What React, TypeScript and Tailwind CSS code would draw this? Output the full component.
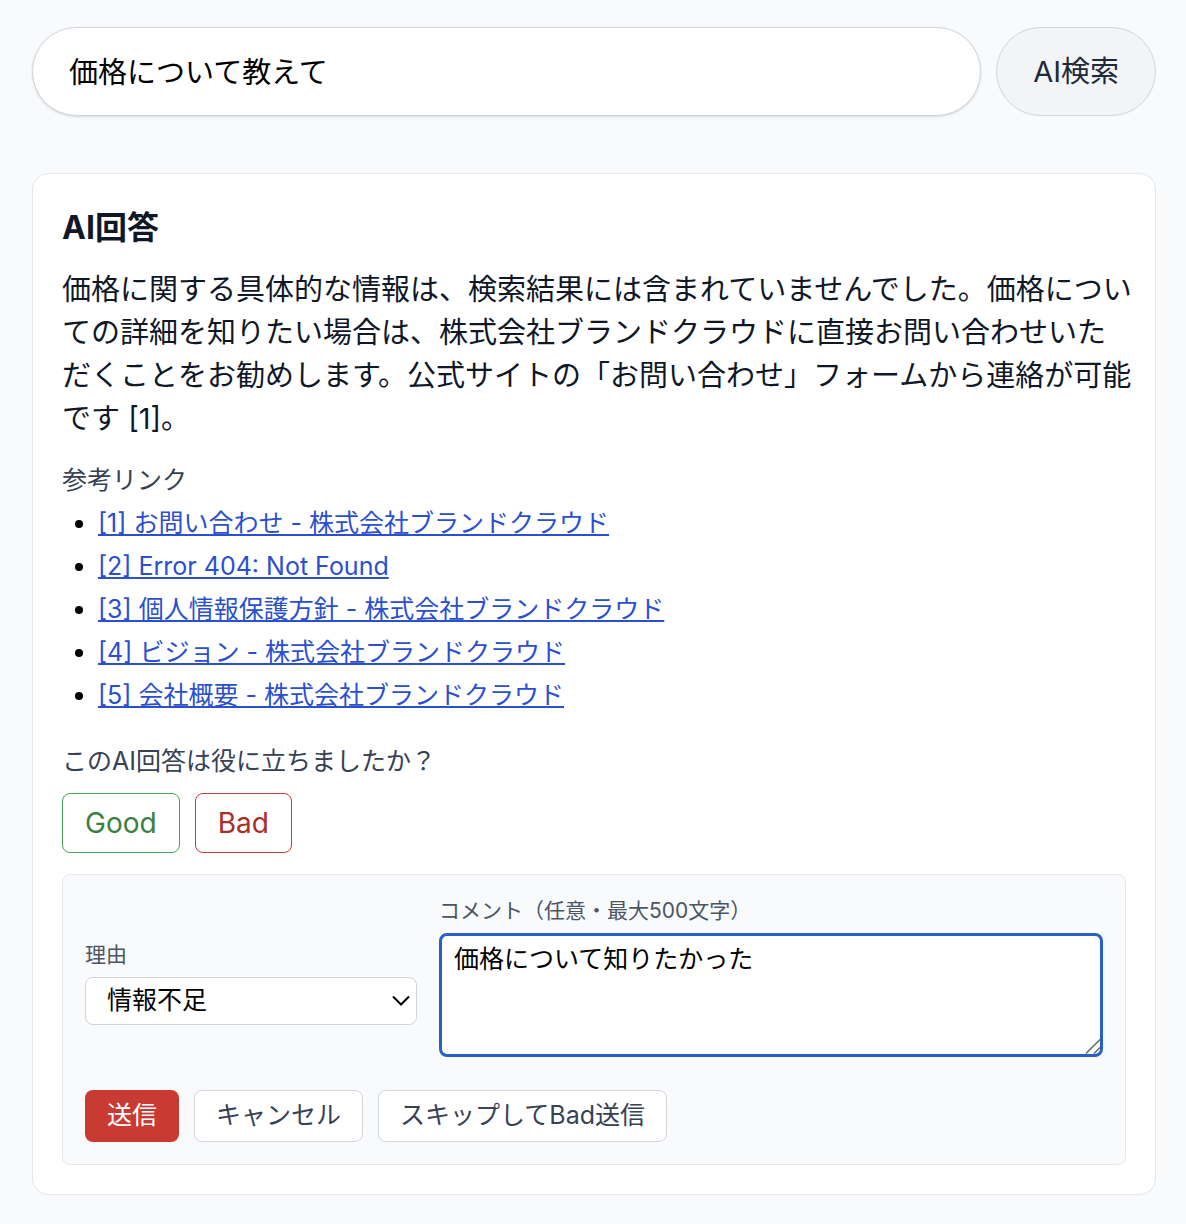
import { useState } from "react";

const links = [
  "[1] お問い合わせ - 株式会社ブランドクラウド",
  "[2] Error 404: Not Found",
  "[3] 個人情報保護方針 - 株式会社ブランドクラウド",
  "[4] ビジョン - 株式会社ブランドクラウド",
  "[5] 会社概要 - 株式会社ブランドクラウド",
];

export default function App() {
  const [query, setQuery] = useState("価格について教えて");
  const [reason, setReason] = useState("情報不足");
  const [comment, setComment] = useState("価格について知りたかった");

  return (
    <div className="min-h-screen bg-gray-50 pl-8 pr-[30px] pt-[27px] pb-[29px] text-gray-900 font-[Inter,'Noto_Sans_CJK_JP',sans-serif]">
      {/* Search bar */}
      <form className="flex gap-[15px] mb-[57px]" onSubmit={(e) => e.preventDefault()}>
        <input
          type="text"
          aria-label="検索キーワード"
          value={query}
          onChange={(e) => setQuery(e.target.value)}
          className="flex-1 min-w-0 h-[89px] px-9 pb-1 rounded-full border border-gray-300 bg-white text-black text-[29px] shadow-sm focus:outline-none"
        />
        <button
          type="submit"
          className="h-[89px] px-9 rounded-full border border-gray-300 bg-gray-100 text-gray-800 text-[29px]"
        >
          AI検索
        </button>
      </form>

      {/* Answer card */}
      <section className="rounded-2xl border border-gray-200 bg-white px-[29px] pt-[33px] pb-[29px]">
        <h2 className="text-[32px] leading-[42px] font-bold mb-[19px]">AI回答</h2>
        <p className="text-[29px] leading-[43px] mb-[22px] -mr-4">
          価格に関する具体的な情報は、検索結果には含まれていませんでした。価格についての詳細を知りたい場合は、株式会社ブランドクラウドに直接お問い合わせいた
          <br />
          だくことをお勧めします。公式サイトの「お問い合わせ」フォームから連絡が可能です [1]。
        </p>

        <h3 className="text-[25px] leading-9 text-gray-700 mb-[7px]">参考リンク</h3>
        <ul className="list-disc pl-9 mb-[30px] text-[25px] leading-9 space-y-[7px] text-black">
          {links.map((link) => (
            <li key={link}>
              <a href="#" className="text-[#2a4fd0] underline">
                {link}
              </a>
            </li>
          ))}
        </ul>

        {/* Feedback */}
        <p className="text-[25px] leading-9 text-gray-700 mb-[14px]">このAI回答は役に立ちましたか？</p>
        <div className="flex gap-[15px] mb-[21px]">
          <button className="h-[60px] px-[22px] rounded-lg border border-[#4aa157] bg-white text-[#3b7f43] text-[28px]">
            Good
          </button>
          <button className="h-[60px] px-[22px] rounded-lg border border-[#c93a32] bg-white text-[#a92e27] text-[28px]">
            Bad
          </button>
        </div>

        <form
          className="rounded-lg border border-gray-200 bg-gray-50 p-[22px]"
          onSubmit={(e) => e.preventDefault()}
        >
          <div className="grid grid-cols-[1fr_2fr] gap-[22px] items-end mb-[33px]">
            <div className="pb-8">
              <label htmlFor="reason" className="block text-[21px] leading-8 text-gray-600 mb-[6px]">
                理由
              </label>
              <div className="relative">
                <select
                  id="reason"
                  value={reason}
                  onChange={(e) => setReason(e.target.value)}
                  className="block w-full h-12 px-[21px] appearance-none rounded-lg border border-gray-300 bg-white text-black text-[25px]"
                >
                  <option>情報不足</option>
                </select>
                <svg
                  viewBox="0 0 18 11"
                  className="absolute right-[7px] top-[18px] w-[18px] h-[11px] pointer-events-none"
                  fill="none"
                  stroke="black"
                  strokeWidth="2"
                >
                  <path d="M1 1.5 L9 9.5 L17 1.5" />
                </svg>
              </div>
            </div>
            <div>
              <label htmlFor="comment" className="block text-[21px] leading-7 text-gray-600 mb-2">
                コメント（任意・最大500文字）
              </label>
              <div className="relative">
                <textarea
                  id="comment"
                  maxLength={500}
                  value={comment}
                  onChange={(e) => setComment(e.target.value)}
                  className="block w-full h-[124px] px-3 py-[5px] resize-none rounded-lg border-3 border-[#2660c8] bg-white text-black text-[25px] leading-9 focus:outline-none"
                />
                {/* Resize grip */}
                <svg
                  viewBox="0 0 15 15"
                  className="absolute right-[3px] bottom-[3px] size-[15px] pointer-events-none"
                  fill="none"
                  stroke="#666"
                  strokeWidth="1.5"
                >
                  <path d="M1 14.5 L15 0.5 M9 14.5 L15 8.5" />
                </svg>
              </div>
            </div>
          </div>
          <div className="flex gap-[15px]">
            <button type="submit" className="h-[52px] px-[22px] rounded-lg bg-[#c93a32] text-white text-[25px]">
              送信
            </button>
            <button type="button" className="h-[52px] px-[21px] rounded-lg border border-gray-300 bg-white text-gray-700 text-[25px]">
              キャンセル
            </button>
            <button type="button" className="h-[52px] px-[21px] rounded-lg border border-gray-300 bg-white text-gray-700 text-[25px]">
              スキップしてBad送信
            </button>
          </div>
        </form>
      </section>
    </div>
  );
}
